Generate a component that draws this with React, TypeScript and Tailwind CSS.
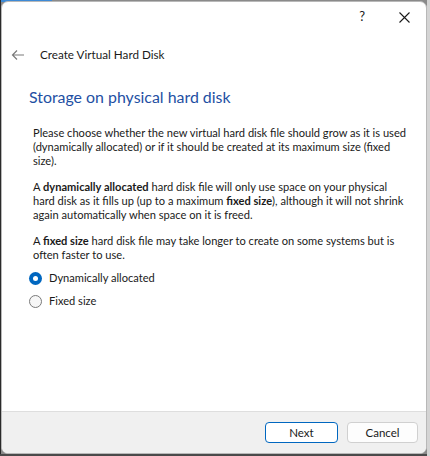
import React from "react";

export default function App() {
  const font = { fontFamily: 'Lato, "Noto Sans", sans-serif' } as React.CSSProperties;
  return (
    <div className="w-[430px] h-[456px] bg-[#8a8a8a] relative overflow-hidden" style={font}>
      <div className="absolute left-0 top-0 w-[52px] h-[2px] bg-[#3d8ad6]" />
      <div className="absolute left-0 top-0 w-[1px] h-[456px] bg-[#2a2a2a]" />
      <div className="absolute left-0 bottom-0 w-[430px] h-[2px] bg-[#4a4a4a]" />
      <div className="absolute left-[427px] top-0 w-[3px] h-[456px] bg-[#d4d4d4]" />
      <div className="absolute left-[1px] top-[1px] w-[426px] h-[453px] bg-white rounded-[7px] border border-[#b8b8b8] overflow-hidden flex flex-col text-[#1a1a1a]">
        {/* title bar */}
        <div className="h-[30px] flex items-center justify-end shrink-0">
          <span className="text-[13px] mr-[34px]">?</span>
          <svg width="11" height="11" viewBox="0 0 11 11" className="mr-[16px]">
            <path d="M0.5 0.5 L10.5 10.5 M10.5 0.5 L0.5 10.5" stroke="#1a1a1a" strokeWidth="1.1" />
          </svg>
        </div>
        {/* header */}
        <div className="h-[48px] flex items-center shrink-0 -mt-[1px]">
          <svg width="14" height="12" viewBox="0 0 14 12" className="ml-[9px]">
            <path d="M13 6 H1.5 M6 1.5 L1.5 6 L6 10.5" stroke="#7a7a7a" strokeWidth="1.2" fill="none" />
          </svg>
          <span className="ml-[15px] text-[11.7px]">Create Virtual Hard Disk</span>
        </div>
        <div className="flex-1 pl-[27px] pr-[10px]">
          <div className="text-[15.9px] text-[#1e4fa3] leading-[20px] mt-[8px]">Storage on physical hard disk</div>
          <div className="pl-[4px] text-[11.1px] leading-[14px] mt-[19px] whitespace-nowrap">
            <p>
              Please choose whether the new virtual hard disk file should grow as it is used<br />
              (dynamically allocated) or if it should be created at its maximum size (fixed<br />
              size).
            </p>
            <p className="mt-[12px]">
              A <b>dynamically allocated</b> hard disk file will only use space on your physical<br />
              hard disk as it fills up (up to a maximum <b>fixed size</b>), although it will not shrink<br />
              again automatically when space on it is freed.
            </p>
            <p className="mt-[12px]">
              A <b>fixed size</b> hard disk file may take longer to create on some systems but is<br />
              often faster to use.
            </p>
          </div>
          <div className="mt-[9px] flex flex-col gap-[9px] text-[11.1px]">
            <div className="flex items-center h-[14px]">
              <span className="w-[13px] h-[13px] rounded-full bg-[#0067c0] flex items-center justify-center">
                <span className="w-[5px] h-[5px] rounded-full bg-white" />
              </span>
              <span className="ml-[7px]">Dynamically allocated</span>
            </div>
            <div className="flex items-center h-[14px]">
              <span className="w-[13px] h-[13px] rounded-full border border-[#7a7a7a] bg-[#f7f7f7]" />
              <span className="ml-[7px]">Fixed size</span>
            </div>
          </div>
        </div>
        {/* footer */}
        <div className="h-[42px] shrink-0 bg-[#f0f0f0] border-t border-[#dedede] flex items-center justify-end pr-[8px] gap-[9px]">
          <button className="w-[73px] h-[21px] rounded-[4px] bg-white border border-[#0067c0] text-[11.5px] flex items-center justify-center">Next</button>
          <button className="w-[71px] h-[21px] rounded-[4px] bg-[#fdfdfd] border border-[#d0d0d0] text-[11.5px] flex items-center justify-center">Cancel</button>
        </div>
      </div>
    </div>
  );
}
